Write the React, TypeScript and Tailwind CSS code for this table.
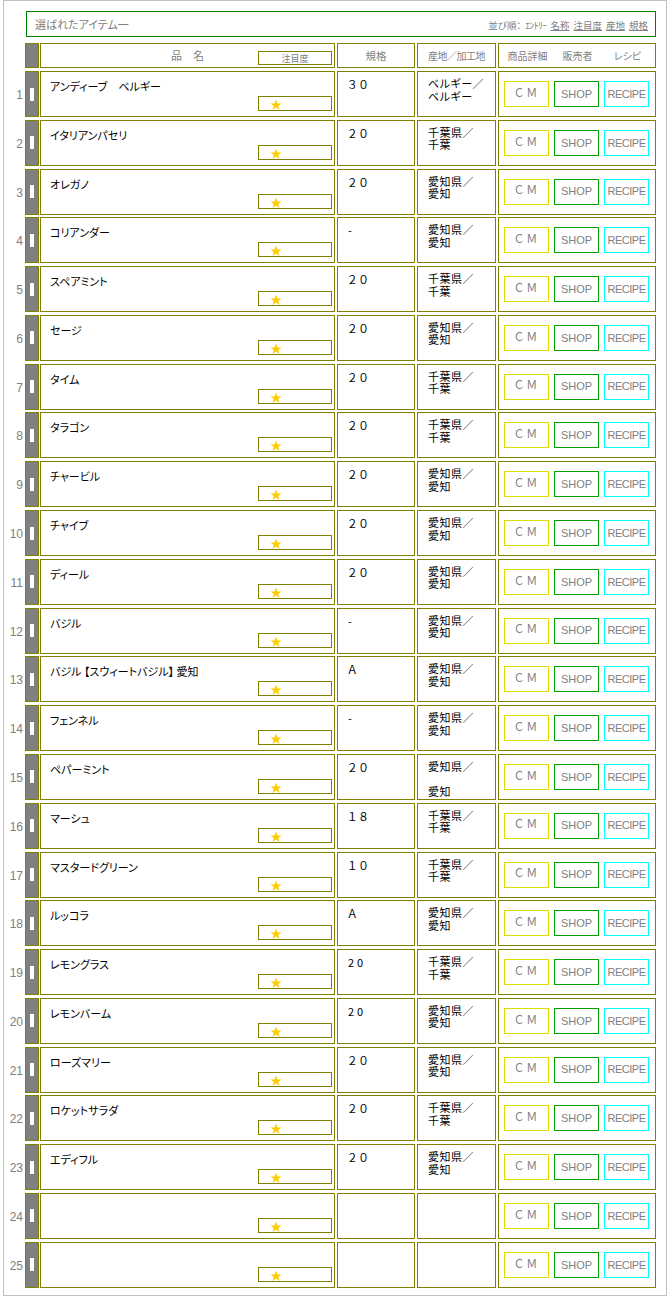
import React from "react";

type Item = { name: string; spec: string; origin: string[] };

const items: Item[] = [
  { name: "アンディーブ　ベルギー", spec: "３０", origin: ["ベルギー／", "ベルギー"] },
  { name: "イタリアンパセリ", spec: "２０", origin: ["千葉県／", "千葉"] },
  { name: "オレガノ", spec: "２０", origin: ["愛知県／", "愛知"] },
  { name: "コリアンダー", spec: "-", origin: ["愛知県／", "愛知"] },
  { name: "スペアミント", spec: "２０", origin: ["千葉県／", "千葉"] },
  { name: "セージ", spec: "２０", origin: ["愛知県／", "愛知"] },
  { name: "タイム", spec: "２０", origin: ["千葉県／", "千葉"] },
  { name: "タラゴン", spec: "２０", origin: ["千葉県／", "千葉"] },
  { name: "チャービル", spec: "２０", origin: ["愛知県／", "愛知"] },
  { name: "チャイブ", spec: "２０", origin: ["愛知県／", "愛知"] },
  { name: "ディール", spec: "２０", origin: ["愛知県／", "愛知"] },
  { name: "バジル", spec: "-", origin: ["愛知県／", "愛知"] },
  { name: "バジル 【スウィートバジル】 愛知", spec: "Ａ", origin: ["愛知県／", "愛知"] },
  { name: "フェンネル", spec: "-", origin: ["愛知県／", "愛知"] },
  { name: "ペパーミント", spec: "２０", origin: ["愛知県／", "", "愛知"] },
  { name: "マーシュ", spec: "１８", origin: ["千葉県／", "千葉"] },
  { name: "マスタードグリーン", spec: "１０", origin: ["千葉県／", "千葉"] },
  { name: "ルッコラ", spec: "Ａ", origin: ["愛知県／", "愛知"] },
  { name: "レモングラス", spec: "20", origin: ["千葉県／", "千葉"] },
  { name: "レモンバーム", spec: "20", origin: ["愛知県／", "愛知"] },
  { name: "ローズマリー", spec: "２０", origin: ["愛知県／", "愛知"] },
  { name: "ロケットサラダ", spec: "２０", origin: ["千葉県／", "千葉"] },
  { name: "エディフル", spec: "２０", origin: ["愛知県／", "愛知"] },
  { name: "", spec: "", origin: [] },
  { name: "", spec: "", origin: [] },
];

function Star() {
  return (
    <svg width="12" height="12" viewBox="0 0 24 24" className="absolute left-[11px] top-[2px]">
      <polygon
        points="12,1 15,9 23,9 16.5,14 19,22 12,17 5,22 7.5,14 1,9 9,9"
        fill="#ffcc00"
      />
    </svg>
  );
}

const jp = "font-['Noto_Sans_CJK_JP',sans-serif] [font-feature-settings:'palt']";

export default function App(): React.ReactElement {
  return (
    <main className={`w-[664px] h-[1296px] ml-[3px] border border-[#c0c0c0] bg-white ${jp}`}>
      {/* --- TOP BAR --- */}
      <div className="ml-[22px] mt-[10px] w-[630px] h-[26px] border border-[#008000] flex items-center justify-between pl-[8px] pr-[7px]">
        <span className="text-[11px] text-[#808080] leading-none">選ばれたアイテム一</span>
        <span className="text-[9.5px] text-[#808080] leading-none mt-[4px] flex gap-[4px]">
          <span>並び順：</span>
          <span className="tracking-[-0.5px]">ｴﾝﾄﾘｰ</span>
          <span className="underline">名称</span>
          <span className="underline">注目度</span>
          <span className="underline">産地</span>
          <span className="underline">規格</span>
        </span>
      </div>

      {/* --- HEADER ROW --- */}
      <div className="flex mt-[6px] h-[25px]">
        <div className="w-[21px]" />
        <div className="w-[14px] bg-[#808080] border border-[#808000]" />
        <div className="relative ml-[1px] w-[295px] border border-[#808000] flex items-center justify-center text-[11px] text-[#808080]">
          品　名
          <div className="absolute right-[2px] top-[7px] w-[74px] h-[14px] border border-[#808000] flex items-center justify-center text-[9px] leading-none">
            注目度
          </div>
        </div>
        <div className="ml-[2px] w-[78px] border border-[#808000] flex items-center justify-center text-[10.5px] text-[#808080]">
          規格
        </div>
        <div className="ml-[2px] w-[79px] border border-[#808000] flex items-center justify-center text-[10px] text-[#808080] tracking-[-0.5px]">
          産地／加工地
        </div>
        <div className="ml-[2px] w-[158px] border border-[#808000] flex items-center pl-[6px] gap-[5px] text-[10px] text-[#808080]">
          <span className="w-[45px] text-center">商品詳細</span>
          <span className="w-[45px] text-center">販売者</span>
          <span className="w-[45px] text-center">レシピ</span>
        </div>
      </div>

      {/* --- ITEM ROWS --- */}
      <div className="mt-[3px] flex flex-col gap-[2.79px]">
        {items.map((item, i) => (
          <div key={i} className="flex h-[46px]">
            <div className="w-[21px] pr-[2px] flex items-center justify-end pt-[2px] text-[12px] text-[#808080] font-['Liberation_Sans',sans-serif]">
              {i + 1}
            </div>
            <div className="w-[14px] bg-[#808080] border border-[#808000] flex items-center justify-center">
              <div className="w-[4px] h-[13px] bg-white ml-[-1px]" />
            </div>
            <div className="relative ml-[1px] w-[295px] border border-[#808000] pl-[9px] pt-[8px] text-[11px] leading-[13px] text-black">
              {item.name}
              <div className="absolute right-[2px] bottom-[5px] w-[74px] h-[15px] border border-[#808000]">
                <Star />
              </div>
            </div>
            <div className="ml-[2px] w-[78px] border border-[#808000] pl-[10px] pt-[5px] text-[11px] leading-[14px] text-black tracking-[3px]">
              {item.spec}
            </div>
            <div className="ml-[2px] w-[79px] border border-[#808000] pl-[10px] pt-[5px] text-[11px] leading-[12.5px] text-black tracking-[0.5px]">
              {item.origin.map((line, j) => (
                <div key={j} className="h-[12.5px]">{line}</div>
              ))}
            </div>
            <div className="ml-[2px] w-[158px] border border-[#808000] flex items-center pl-[5px] gap-[5px] text-[11px] text-[#808080] font-['Liberation_Sans','Noto_Sans_CJK_JP',sans-serif]">
              <div className="w-[45px] h-[26px] border border-[#dddd00] flex items-center justify-center tracking-[3px] pl-[2px] pb-[2px]">
                ＣＭ
              </div>
              <div className="w-[45px] h-[26px] border border-[#00a000] flex items-center justify-center">
                SHOP
              </div>
              <div className="w-[45px] h-[26px] border border-[#00ffff] flex items-center justify-center tracking-[-0.5px]">
                RECIPE
              </div>
            </div>
          </div>
        ))}
      </div>
    </main>
  );
}
